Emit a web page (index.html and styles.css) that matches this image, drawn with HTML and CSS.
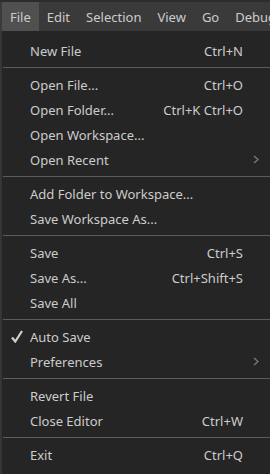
FILE: index.html
```html
<!DOCTYPE html>
<html>
<head>
<meta charset="utf-8">
<link rel="stylesheet" href="styles.css">
</head>
<body>
<div class="window">
  <div class="menubar">
    <span class="mb-item active">File</span>
    <span class="mb-item">Edit</span>
    <span class="mb-item">Selection</span>
    <span class="mb-item">View</span>
    <span class="mb-item">Go</span>
    <span class="mb-item">Debug</span>
  </div>
  <div class="menu">
    <div class="item"><span class="label">New File</span><span class="key">Ctrl+N</span></div>
    <div class="sep"></div>
    <div class="item"><span class="label">Open File...</span><span class="key">Ctrl+O</span></div>
    <div class="item"><span class="label">Open Folder...</span><span class="key">Ctrl+K Ctrl+O</span></div>
    <div class="item"><span class="label">Open Workspace...</span></div>
    <div class="item"><span class="label">Open Recent</span><svg class="chev" width="6" height="9" viewBox="0 0 6 9"><polyline points="1,1 5,4.5 1,8" fill="none" stroke="#7a7a7a" stroke-width="1.3"/></svg></div>
    <div class="sep"></div>
    <div class="item"><span class="label">Add Folder to Workspace...</span></div>
    <div class="item"><span class="label">Save Workspace As...</span></div>
    <div class="sep"></div>
    <div class="item"><span class="label">Save</span><span class="key">Ctrl+S</span></div>
    <div class="item"><span class="label">Save As...</span><span class="key">Ctrl+Shift+S</span></div>
    <div class="item"><span class="label">Save All</span></div>
    <div class="sep"></div>
    <div class="item"><svg class="check" width="12" height="13" viewBox="0 0 12 13"><path d="M1 7.5 L4.3 11.5 L11 1" fill="none" stroke="#d0d0d0" stroke-width="2.2" stroke-linejoin="miter"/></svg><span class="label">Auto Save</span></div>
    <div class="item"><span class="label">Preferences</span><svg class="chev" width="6" height="9" viewBox="0 0 6 9"><polyline points="1,1 5,4.5 1,8" fill="none" stroke="#7a7a7a" stroke-width="1.3"/></svg></div>
    <div class="sep"></div>
    <div class="item"><span class="label">Revert File</span></div>
    <div class="item"><span class="label">Close Editor</span><span class="key">Ctrl+W</span></div>
    <div class="sep"></div>
    <div class="item"><span class="label">Exit</span><span class="key">Ctrl+Q</span></div>
  </div>
</div>
</body>
</html>
```
FILE: styles.css
```css
html, body {
  margin: 0;
  padding: 0;
  background: #252526;
}
.window {
  width: 270px;
  height: 474px;
  overflow: hidden;
  font-family: "Noto Sans", "DejaVu Sans", sans-serif;
  font-size: 13px;
  color: #cccccc;
  background: #252525;
}
.menubar {
  height: 29px;
  border-top: 2px solid #2c2c2c;
  background: #3a3a3a;
  display: flex;
  align-items: stretch;
  padding-left: 2px;
  white-space: nowrap;
  overflow: hidden;
}
.mb-item {
  display: flex;
  align-items: center;
  padding: 0 8px;
  color: #cccccc;
}
.mb-item.active {
  background: #505050;
}
.menu {
  height: 443px;
  border-left: 2px solid #363636;
  padding-top: 7px;
  background: #252525;
}
.item {
  position: relative;
  height: 25px;
  display: flex;
  align-items: center;
  padding-left: 28px;
  padding-right: 27px;
}
.label {
  flex: 1;
}
.key {
  color: #cccccc;
}
.chev {
  position: absolute;
  right: 11px;
  top: 8px;
}
.check {
  position: absolute;
  left: 9px;
  top: 6px;
}
.sep {
  height: 1px;
  background: #5c5c5c;
  margin: 4px 0 4px 1px;
}
```
